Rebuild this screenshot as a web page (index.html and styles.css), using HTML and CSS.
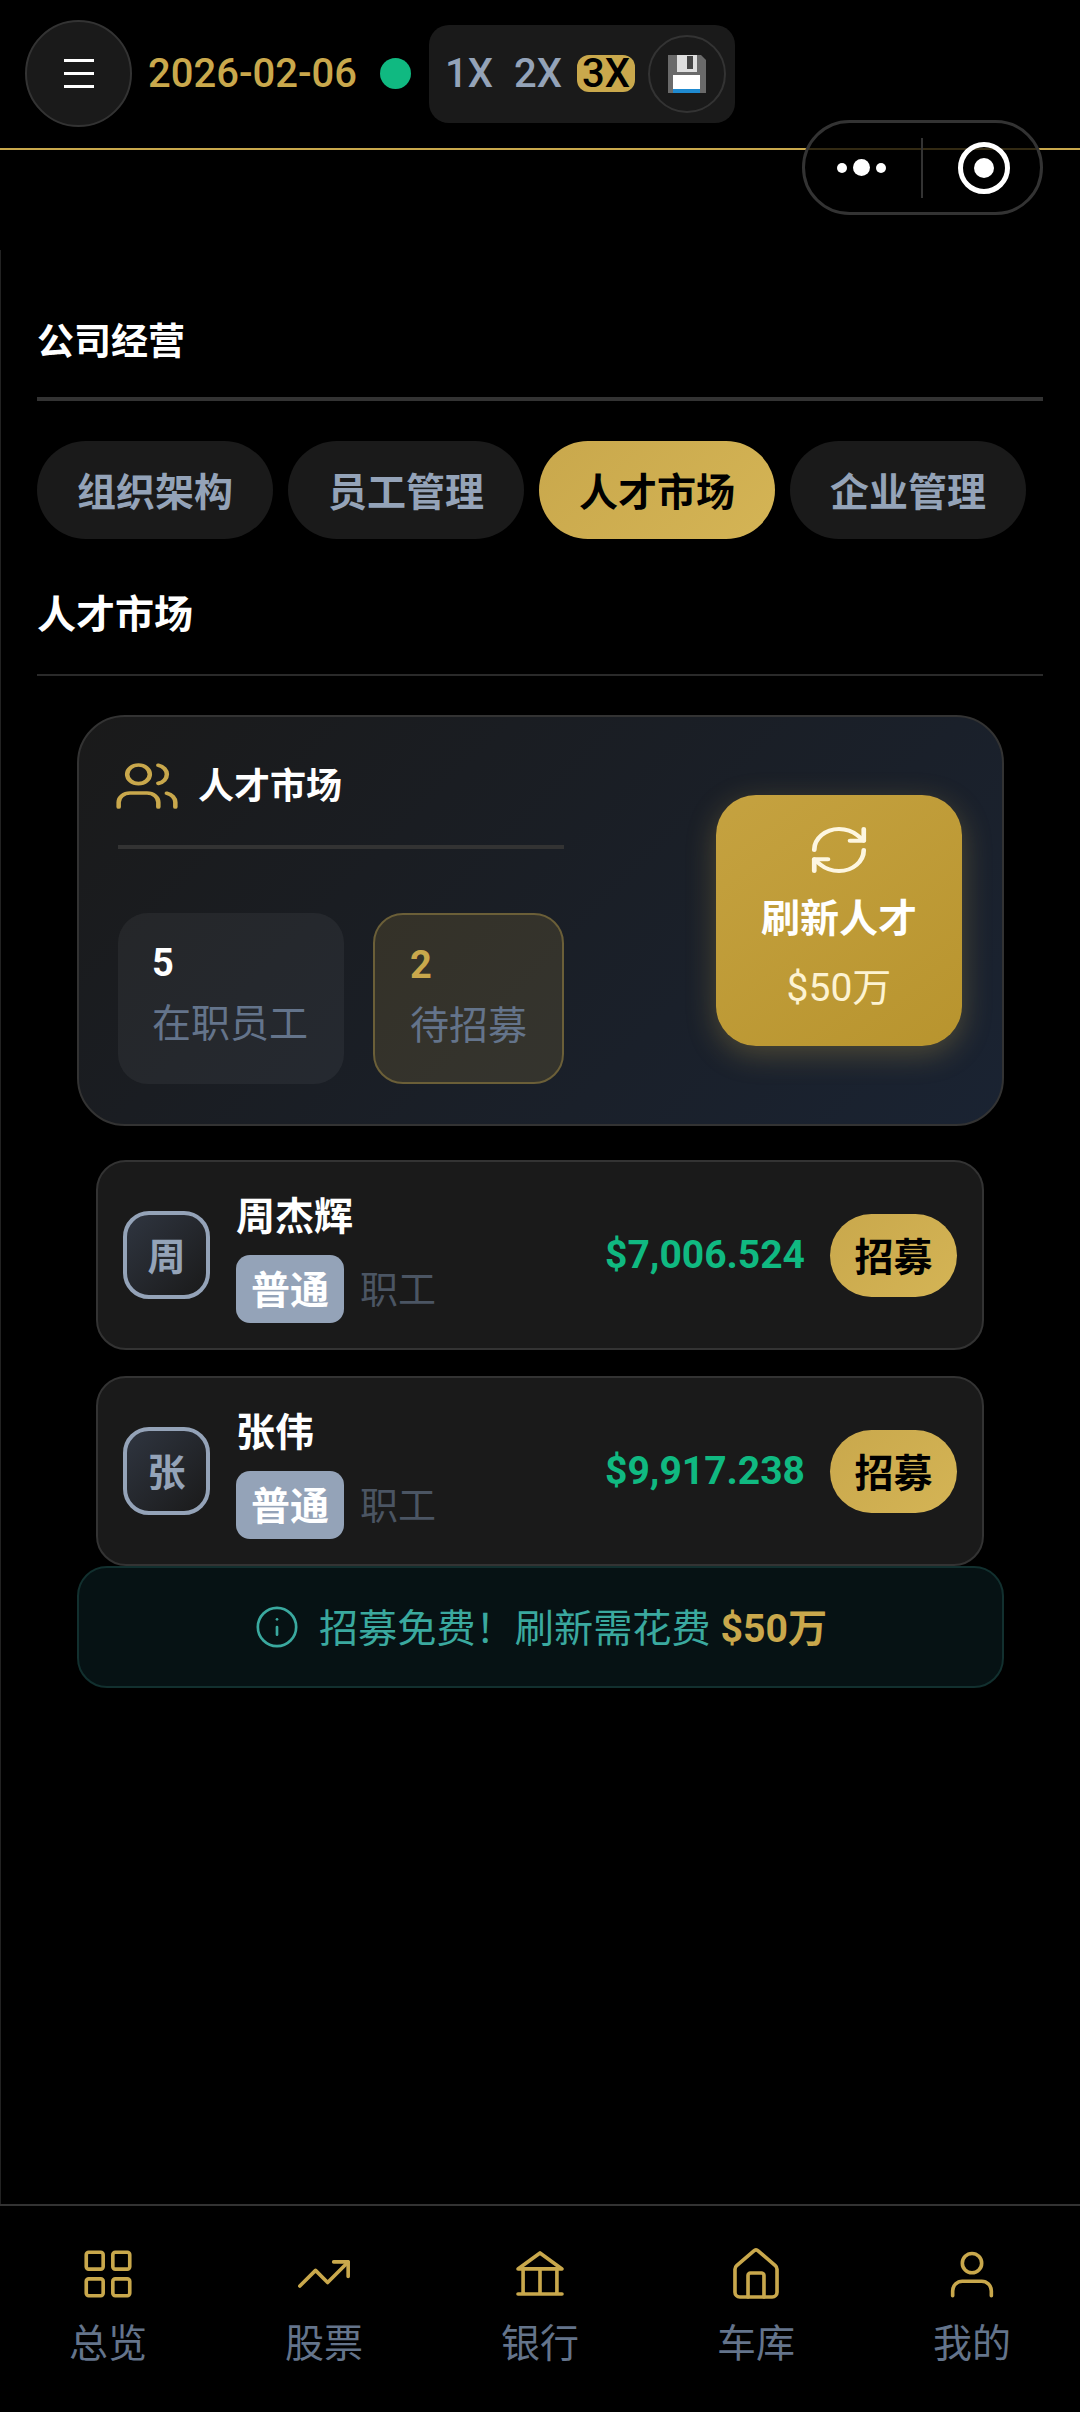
FILE: index.html
```html
<!DOCTYPE html>
<html lang="zh-CN">

<head>
  <meta charset="UTF-8">
  <meta name="viewport" content="width=device-width, initial-scale=1.0">
  <title>公司经营</title>
  <link rel="stylesheet" href="styles.css">
</head>

<body>
  <header class="topbar">
    <button type="button" class="menu-btn"><span></span><span></span><span></span></button>
    <span class="date">2026-02-06</span>
    <span class="status-dot"></span>
    <div class="speed-panel">
      <span class="speed">1X</span>
      <span class="speed">2X</span>
      <span class="speed speed-active">3X</span>
      <button type="button" class="save-btn">
        <svg width="38" height="38" viewBox="0 0 38 38">
          <path d="M0 0H33L38 5V38H0Z" fill="#6a6a6a" />
          <rect x="9" y="0" width="20" height="17" fill="#dedede" />
          <rect x="19" y="1" width="6" height="13" fill="#444" />
          <rect x="5" y="20" width="27" height="14" fill="#fff" />
          <rect x="5" y="34" width="27" height="4" fill="#1f8ad0" />
        </svg>
      </button>
    </div>
  </header>

  <!-- 小程序胶囊 -->
  <div class="capsule">
    <div class="capsule-dots"><i></i><i class="big"></i><i></i></div>
    <span class="capsule-line"></span>
    <div class="capsule-target"><i></i></div>
  </div>

  <main class="content">
    <h2 class="page-title">公司经营</h2>

    <nav class="tabs">
      <button type="button" class="tab">组织架构</button>
      <button type="button" class="tab">员工管理</button>
      <button type="button" class="tab tab-active">人才市场</button>
      <button type="button" class="tab">企业管理</button>
    </nav>

    <h3 class="sub-title">人才市场</h3>

    <section class="market-card">
      <div class="market-left">
        <div class="market-head">
          <svg class="icon-users" viewBox="0 0 24 24" preserveAspectRatio="none">
            <path d="M16 21v-2a4 4 0 0 0-4-4H6a4 4 0 0 0-4 4v2" />
            <circle cx="9" cy="7" r="4" />
            <path d="M16 3.13a4 4 0 0 1 0 7.75" />
            <path d="M22 21v-2a4 4 0 0 0-3-3.87" />
          </svg>
          <span>人才市场</span>
        </div>
        <div class="stats">
          <div class="stat">
            <div class="stat-num">5</div>
            <div class="stat-label">在职员工</div>
          </div>
          <div class="stat stat-gold">
            <div class="stat-num">2</div>
            <div class="stat-label">待招募</div>
          </div>
        </div>
      </div>
      <button type="button" class="refresh-btn">
        <svg class="icon-refresh" viewBox="0 0 24 24" preserveAspectRatio="none">
          <path d="M3 12a9 9 0 0 1 9-9 9.75 9.75 0 0 1 6.74 2.74L21 8" />
          <path d="M21 3v5h-5" />
          <path d="M21 12a9 9 0 0 1-9 9 9.75 9.75 0 0 1-6.74-2.74L3 16" />
          <path d="M8 16H3v5" />
        </svg>
        <span class="refresh-title">刷新人才</span>
        <span class="refresh-price">$50万</span>
      </button>
    </section>

    <div class="candidates">
      <div class="candidate">
        <div class="avatar">周</div>
        <div class="candidate-info">
          <div class="candidate-name">周杰辉</div>
          <div class="candidate-meta"><span class="tag">普通</span><span class="role">职工</span></div>
        </div>
        <span class="salary">$7,006.524</span>
        <button type="button" class="hire-btn">招募</button>
      </div>
      <div class="candidate">
        <div class="avatar">张</div>
        <div class="candidate-info">
          <div class="candidate-name">张伟</div>
          <div class="candidate-meta"><span class="tag">普通</span><span class="role">职工</span></div>
        </div>
        <span class="salary">$9,917.238</span>
        <button type="button" class="hire-btn">招募</button>
      </div>
    </div>

    <div class="notice">
      <svg class="icon-info" viewBox="0 0 24 24">
        <circle cx="12" cy="12" r="10" />
        <path d="M12 16v-4" />
        <path d="M12 8h.01" />
      </svg>
      <span class="notice-text">招募免费！刷新需花费 <b>$50万</b></span>
    </div>
  </main>

  <nav class="bottom-nav">
    <div class="nav-item">
      <svg viewBox="0 0 24 24">
        <rect x="3" y="3" width="7" height="7" rx="1" />
        <rect x="14" y="3" width="7" height="7" rx="1" />
        <rect x="3" y="14" width="7" height="7" rx="1" />
        <rect x="14" y="14" width="7" height="7" rx="1" />
      </svg>
      <span>总览</span>
    </div>
    <div class="nav-item">
      <svg viewBox="0 0 24 24">
        <path d="M16 7h6v6" />
        <path d="m22 7-8.5 8.5-5-5L2 17" />
      </svg>
      <span>股票</span>
    </div>
    <div class="nav-item">
      <svg viewBox="0 0 24 24">
        <path d="M2.9 9.9 12 3.3l9.1 6.6Z" />
        <path d="M5 9.9v10.4M12 9.9v10.4M19 9.9v10.4M2.9 20.3h18.2" />
      </svg>
      <span>银行</span>
    </div>
    <div class="nav-item">
      <svg viewBox="0 0 24 24">
        <path d="M3.3 10a2 2 0 0 1 .7-1.5l7-6a1.5 1.5 0 0 1 2 0l7 6a2 2 0 0 1 .7 1.5v9.5a2 2 0 0 1-2 2H5.3a2 2 0 0 1-2-2z" />
        <path d="M8.7 21.5v-8.9a1 1 0 0 1 1-1h4.6a1 1 0 0 1 1 1v8.9" />
      </svg>
      <span>车库</span>
    </div>
    <div class="nav-item">
      <svg viewBox="0 0 24 24">
        <circle cx="12" cy="7.5" r="4" />
        <path d="M4 21v-2a4 4 0 0 1 4-4h8a4 4 0 0 1 4 4v2" />
      </svg>
      <span>我的</span>
    </div>
  </nav>
</body>

</html>
```

FILE: styles.css
```css
* {
  box-sizing: border-box;
}

body {
  margin: 0;
  width: 1080px;
  height: 2412px;
  display: flex;
  flex-direction: column;
  background-color: #000;
  color: #fff;
  font-family: Roboto, "Noto Sans CJK SC", sans-serif;
  position: relative;
  overflow: hidden;
}

button {
  border: none;
  padding: 0;
  font-family: inherit;
}

h2,
h3 {
  margin: 0;
}

/* 顶部栏 */
.topbar {
  height: 150px;
  padding: 20px 0 21px 25px;
  display: flex;
  align-items: center;
  border-bottom: 2px solid #c9a84c;
}

.menu-btn {
  width: 107px;
  height: 107px;
  border-radius: 50%;
  background-color: #1a1a1a;
  border: 2px solid #333;
  display: flex;
  flex-direction: column;
  align-items: center;
  justify-content: center;
  gap: 10px;
}

.menu-btn span {
  width: 30px;
  height: 3px;
  background-color: #fff;
}

.date {
  margin-left: 16px;
  color: #c9a84c;
  font-size: 40px;
  font-weight: 500;
}

.status-dot {
  width: 31px;
  height: 31px;
  margin-left: 23px;
  border-radius: 50%;
  background-color: #10b981;
}

.speed-panel {
  height: 98px;
  margin-left: 18px;
  padding: 0 9px 0 10px;
  display: flex;
  align-items: center;
  gap: 9px;
  border-radius: 20px;
  background-color: #1a1a1a;
}

.speed {
  padding: 0 6px;
  color: #94a3b8;
  font-size: 40px;
  font-weight: 500;
  line-height: 37px;
  border-radius: 12px;
}

.speed-active {
  padding: 0 5px;
  background-color: #c9a84c;
  color: #000;
}

.save-btn {
  width: 78px;
  height: 78px;
  margin-left: 4px;
  border-radius: 50%;
  background-color: transparent;
  border: 2px solid #333;
  display: flex;
  align-items: center;
  justify-content: center;
}

.capsule {
  position: absolute;
  top: 120px;
  left: 802px;
  width: 241px;
  height: 95px;
  border: 3px solid #333;
  border-radius: 48px;
  background-color: rgba(0, 0, 0, 0.75);
  display: flex;
  align-items: center;
}

.capsule-dots {
  width: 116px;
  padding-right: 3px;
  display: flex;
  align-items: center;
  justify-content: center;
  gap: 6px;
}

.capsule-dots i {
  width: 10px;
  height: 10px;
  border-radius: 50%;
  background-color: #fff;
}

.capsule-dots i.big {
  width: 17px;
  height: 17px;
}

.capsule-line {
  width: 2px;
  height: 60px;
  background-color: #333;
}

.capsule-target {
  width: 52px;
  height: 52px;
  margin-left: 35px;
  border: 5px solid #fff;
  border-radius: 50%;
  display: flex;
  align-items: center;
  justify-content: center;
}

.capsule-target i {
  width: 20px;
  height: 20px;
  border-radius: 50%;
  background-color: #fff;
}

/* 主内容 */
.content {
  flex: 1;
  margin-top: 100px;
  padding: 67px 37px 0 36px;
  border-left: 1px solid #222;
}

.page-title {
  font-size: 37px;
  font-weight: 700;
  line-height: 52px;
  padding-bottom: 28px;
  border-bottom: 4px solid #333;
}

.tabs {
  margin-top: 40px;
  display: flex;
  gap: 15px;
}

.tab {
  width: 236px;
  height: 98px;
  padding-bottom: 3px;
  border-radius: 49px;
  background-color: #1a1a1a;
  color: #94a3b8;
  font-size: 39px;
  font-weight: 700;
}

.tab-active {
  background: linear-gradient(135deg, #c9a84c, #d4b455);
  color: #000;
}

.sub-title {
  margin-top: 48px;
  padding-bottom: 31px;
  font-size: 39px;
  font-weight: 700;
  line-height: 56px;
  border-bottom: 2px solid #2a2a2a;
}

.market-card {
  margin: 39px 39px 0 40px;
  height: 411px;
  padding: 39px 40px 40px 39px;
  display: flex;
  align-items: center;
  justify-content: space-between;
  border: 2px solid #333;
  border-radius: 48px;
  background: linear-gradient(135deg, #1a1a1a, #1a2332);
}

.market-left {
  width: 446px;
  align-self: flex-start;
}

.market-head {
  height: 93px;
  padding-bottom: 35px;
  display: flex;
  align-items: center;
  gap: 17px;
  font-size: 36px;
  font-weight: 700;
  border-bottom: 4px solid #333;
}

.icon-users {
  width: 68px;
  height: 56px;
  margin: 6px 0 0 -5px;
  fill: none;
  stroke: #c9a84c;
  stroke-width: 1.6;
  stroke-linecap: round;
  stroke-linejoin: round;
}

.stats {
  margin-top: 64px;
  display: flex;
  gap: 29px;
}

.stat {
  width: 226px;
  height: 171px;
  padding: 26px 0 0 34px;
  border-radius: 30px;
  background-color: rgba(255, 255, 255, 0.05);
}

.stat-gold {
  width: 191px;
  padding-left: 35px;
  border: 2px solid #6b5f38;
  background-color: rgba(201, 168, 76, 0.15);
}

.stat-num {
  font-size: 38px;
  font-weight: 700;
  line-height: 48px;
}

.stat-gold .stat-num {
  color: #c9a84c;
}

.stat-label {
  margin-top: 9px;
  color: #64748b;
  font-size: 39px;
  line-height: 56px;
  white-space: nowrap;
}

.refresh-btn {
  width: 246px;
  height: 251px;
  padding-top: 27px;
  display: flex;
  flex-direction: column;
  align-items: center;
  border-radius: 40px;
  color: #fff;
  background: linear-gradient(145deg, #c5a240, #b8942e);
  box-shadow: 0 8px 30px rgba(201, 168, 76, 0.3);
}

.icon-refresh {
  width: 66px;
  height: 56px;
  fill: none;
  stroke: #fdf6e0;
  stroke-width: 1.7;
  stroke-linecap: round;
  stroke-linejoin: round;
}

.refresh-title {
  margin-top: 16px;
  font-size: 39px;
  font-weight: 700;
  line-height: 50px;
}

.refresh-price {
  margin-top: 19px;
  color: #fdf3d2;
  font-size: 39px;
  line-height: 50px;
}

.candidates {
  margin: 34px 59px 0;
  display: flex;
  flex-direction: column;
  gap: 26px;
}

.candidate {
  padding: 25.5px 25px;
  display: flex;
  align-items: center;
  border: 2px solid #333;
  border-radius: 30px;
  background-color: #1a1a1a;
}

.avatar {
  width: 87px;
  height: 88px;
  padding-bottom: 4px;
  display: flex;
  align-items: center;
  justify-content: center;
  border: 4px solid #94a3b8;
  border-radius: 26px;
  background: linear-gradient(135deg, #2f3540, #1a1a1a);
  color: #94a3b8;
  font-size: 38px;
  font-weight: 700;
}

.candidate-info {
  margin-left: 26px;
  flex: 1;
}

.candidate-name {
  font-size: 39px;
  font-weight: 700;
  line-height: 58px;
}

.candidate-meta {
  margin-top: 9px;
  display: flex;
  align-items: center;
  gap: 16px;
}

.tag {
  width: 108px;
  height: 68px;
  padding-bottom: 4px;
  display: flex;
  align-items: center;
  justify-content: center;
  border-radius: 14px;
  background-color: #94a3b8;
  font-size: 39px;
  font-weight: 700;
}

.role {
  padding-top: 3px;
  color: #4b5563;
  font-size: 38px;
  line-height: 63px;
}

.salary {
  margin-right: 25px;
  color: #10b981;
  font-size: 39px;
  font-weight: 700;
}

.hire-btn {
  width: 127px;
  height: 83px;
  padding-bottom: 2px;
  border-radius: 42px;
  background: linear-gradient(135deg, #c9a84c, #d4b455);
  color: #000;
  font-size: 39px;
  font-weight: 700;
}

.notice {
  margin: 0 39px 0 40px;
  height: 122px;
  display: flex;
  align-items: center;
  justify-content: center;
  gap: 19px;
  border: 2px solid #12302f;
  border-radius: 30px;
  background-color: #061214;
  color: #3aa99f;
  font-size: 39.2px;
}

.notice-text {
  padding-bottom: 4px;
}

.notice b {
  color: #c9a84c;
}

.icon-info {
  width: 46px;
  height: 46px;
  fill: none;
  stroke: #3aa99f;
  stroke-width: 1.4;
  stroke-linecap: round;
}

/* 底部导航 */
.bottom-nav {
  height: 208px;
  padding-top: 39px;
  display: grid;
  grid-template-columns: repeat(5, 1fr);
  align-items: start;
  border-top: 2px solid #333;
}

.nav-item {
  display: flex;
  flex-direction: column;
  align-items: center;
  gap: 13px;
  color: #64748b;
  font-size: 39px;
  line-height: 56px;
}

.nav-item svg {
  width: 58px;
  height: 58px;
  fill: none;
  stroke: #c9a84c;
  stroke-width: 1.5;
  stroke-linecap: round;
  stroke-linejoin: round;
}
```
